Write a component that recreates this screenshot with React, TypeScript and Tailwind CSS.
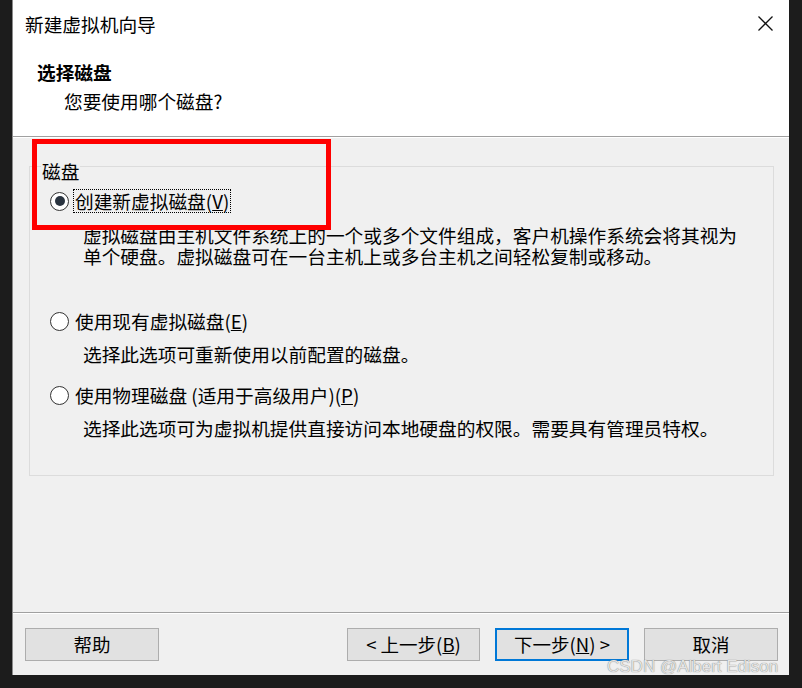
import React from "react";

const font = "[font-family:'Noto_Sans_CJK_SC','Microsoft_YaHei',sans-serif]";

function Radio({ checked }: { checked?: boolean }) {
  return (
    <div className="w-[19px] h-[19px] rounded-full border border-[#333333] bg-white flex items-center justify-center shrink-0">
      {checked && <div className="w-[10px] h-[10px] rounded-full bg-[#2a3440]" />}
    </div>
  );
}

function Btn({ children, def, w = "w-[134px]" }: { children: React.ReactNode; def?: boolean; w?: string }) {
  return (
    <div
      className={`${w} h-[33px] flex items-center justify-center bg-[#e1e1e1] text-[18.5px] leading-[21px] text-black ${
        def ? "border-2 border-[#0078d7]" : "border border-[#adadad]"
      }`}
    >
      {children}
    </div>
  );
}

export default function App() {
  return (
    <div className={`w-[802px] h-[688px] bg-[#1c1c1c] relative overflow-hidden ${font}`}>
      <div className="ml-[12px] w-[777px] h-[675px] bg-[#f0f0f0] flex flex-col border-l border-[#8a8a8a] relative">
        {/* header */}
        <div className="h-[136px] bg-white flex flex-col shrink-0">
          <div className="pt-[12px] pl-[12px] pr-[16px] h-[34px] flex justify-between items-center">
            <span className="text-[18.7px] leading-[21px] text-black">新建虚拟机向导</span>
            <svg width="15" height="15" viewBox="0 0 15 15">
              <path d="M0.5 0.5 L14.5 14.5 M14.5 0.5 L0.5 14.5" stroke="#111" strokeWidth="1.3" fill="none" />
            </svg>
          </div>
          <div className="mt-[27px] ml-[24px] text-[18.7px] leading-[21px] font-bold text-black">选择磁盘</div>
          <div className="mt-[8px] ml-[51px] text-[18.7px] leading-[21px] text-black">您要使用哪个磁盘?</div>
        </div>
        <div className="h-[1px] bg-[#a0a0a0]" />
        <div className="h-[1px] bg-white" />

        {/* body */}
        <div className="flex-1 pt-[28px] pl-[16px] pr-[15px]">
          <div className="relative border border-[#dcdcdc] h-[310px] pl-[20px] text-[18.7px] text-black">
            <div className="absolute left-[11px] top-[-7px] bg-[#f0f0f0] px-[1px] leading-[21px]">磁盘</div>
            <div className="mt-[22px] h-[24px] flex items-center">
              <Radio checked />
              <span className="ml-[4px] border border-dotted border-black px-[1px] leading-[22px] h-[24px]">
                创建新虚拟磁盘(<span className="underline">V</span>)
              </span>
            </div>
            <div className="mt-[11px] ml-[33px] leading-[21px]">
              <div>虚拟磁盘由主机文件系统上的一个或多个文件组成，客户机操作系统会将其视为</div>
              <div>单个硬盘。虚拟磁盘可在一台主机上或多台主机之间轻松复制或移动。</div>
            </div>
            <div className="mt-[43px] h-[24px] flex items-center">
              <Radio />
              <span className="ml-[6px] leading-[24px]">
                使用现有虚拟磁盘(<span className="underline">E</span>)
              </span>
            </div>
            <div className="mt-[10px] ml-[33px] leading-[21px]">选择此选项可重新使用以前配置的磁盘。</div>
            <div className="mt-[19px] h-[24px] flex items-center">
              <Radio />
              <span className="ml-[6px] leading-[24px]">
                使用物理磁盘 (适用于高级用户)(<span className="underline">P</span>)
              </span>
            </div>
            <div className="mt-[10px] ml-[33px] leading-[21px]">
              选择此选项可为虚拟机提供直接访问本地硬盘的权限。需要具有管理员特权。
            </div>
          </div>
        </div>

        {/* footer */}
        <div className="h-[1px] bg-[#a0a0a0]" />
        <div className="h-[1px] bg-white" />
        <div className="h-[61px] pt-[14px] pl-[12px] pr-[11px] flex justify-between">
          <Btn>帮助</Btn>
          <div className="flex gap-[15px]">
            <Btn w="w-[133px]">&lt; 上一步(<span className="underline">B</span>)</Btn>
            <Btn def>
              下一步(<span className="underline">N</span>) &gt;
            </Btn>
            <Btn>取消</Btn>
          </div>
        </div>

        {/* annotation */}
        <div className="absolute left-[19px] top-[139px] w-[299px] h-[91px] border-[5px] border-[#ff0000]" />
      </div>
      <div className="absolute left-[607px] top-[657px] text-[17px] leading-[20px] text-[#e4e4e4] [font-family:'Liberation_Sans',Arial,sans-serif] [text-shadow:0_0_1px_#606060]">
        CSDN @Albert Edison
      </div>
    </div>
  );
}
